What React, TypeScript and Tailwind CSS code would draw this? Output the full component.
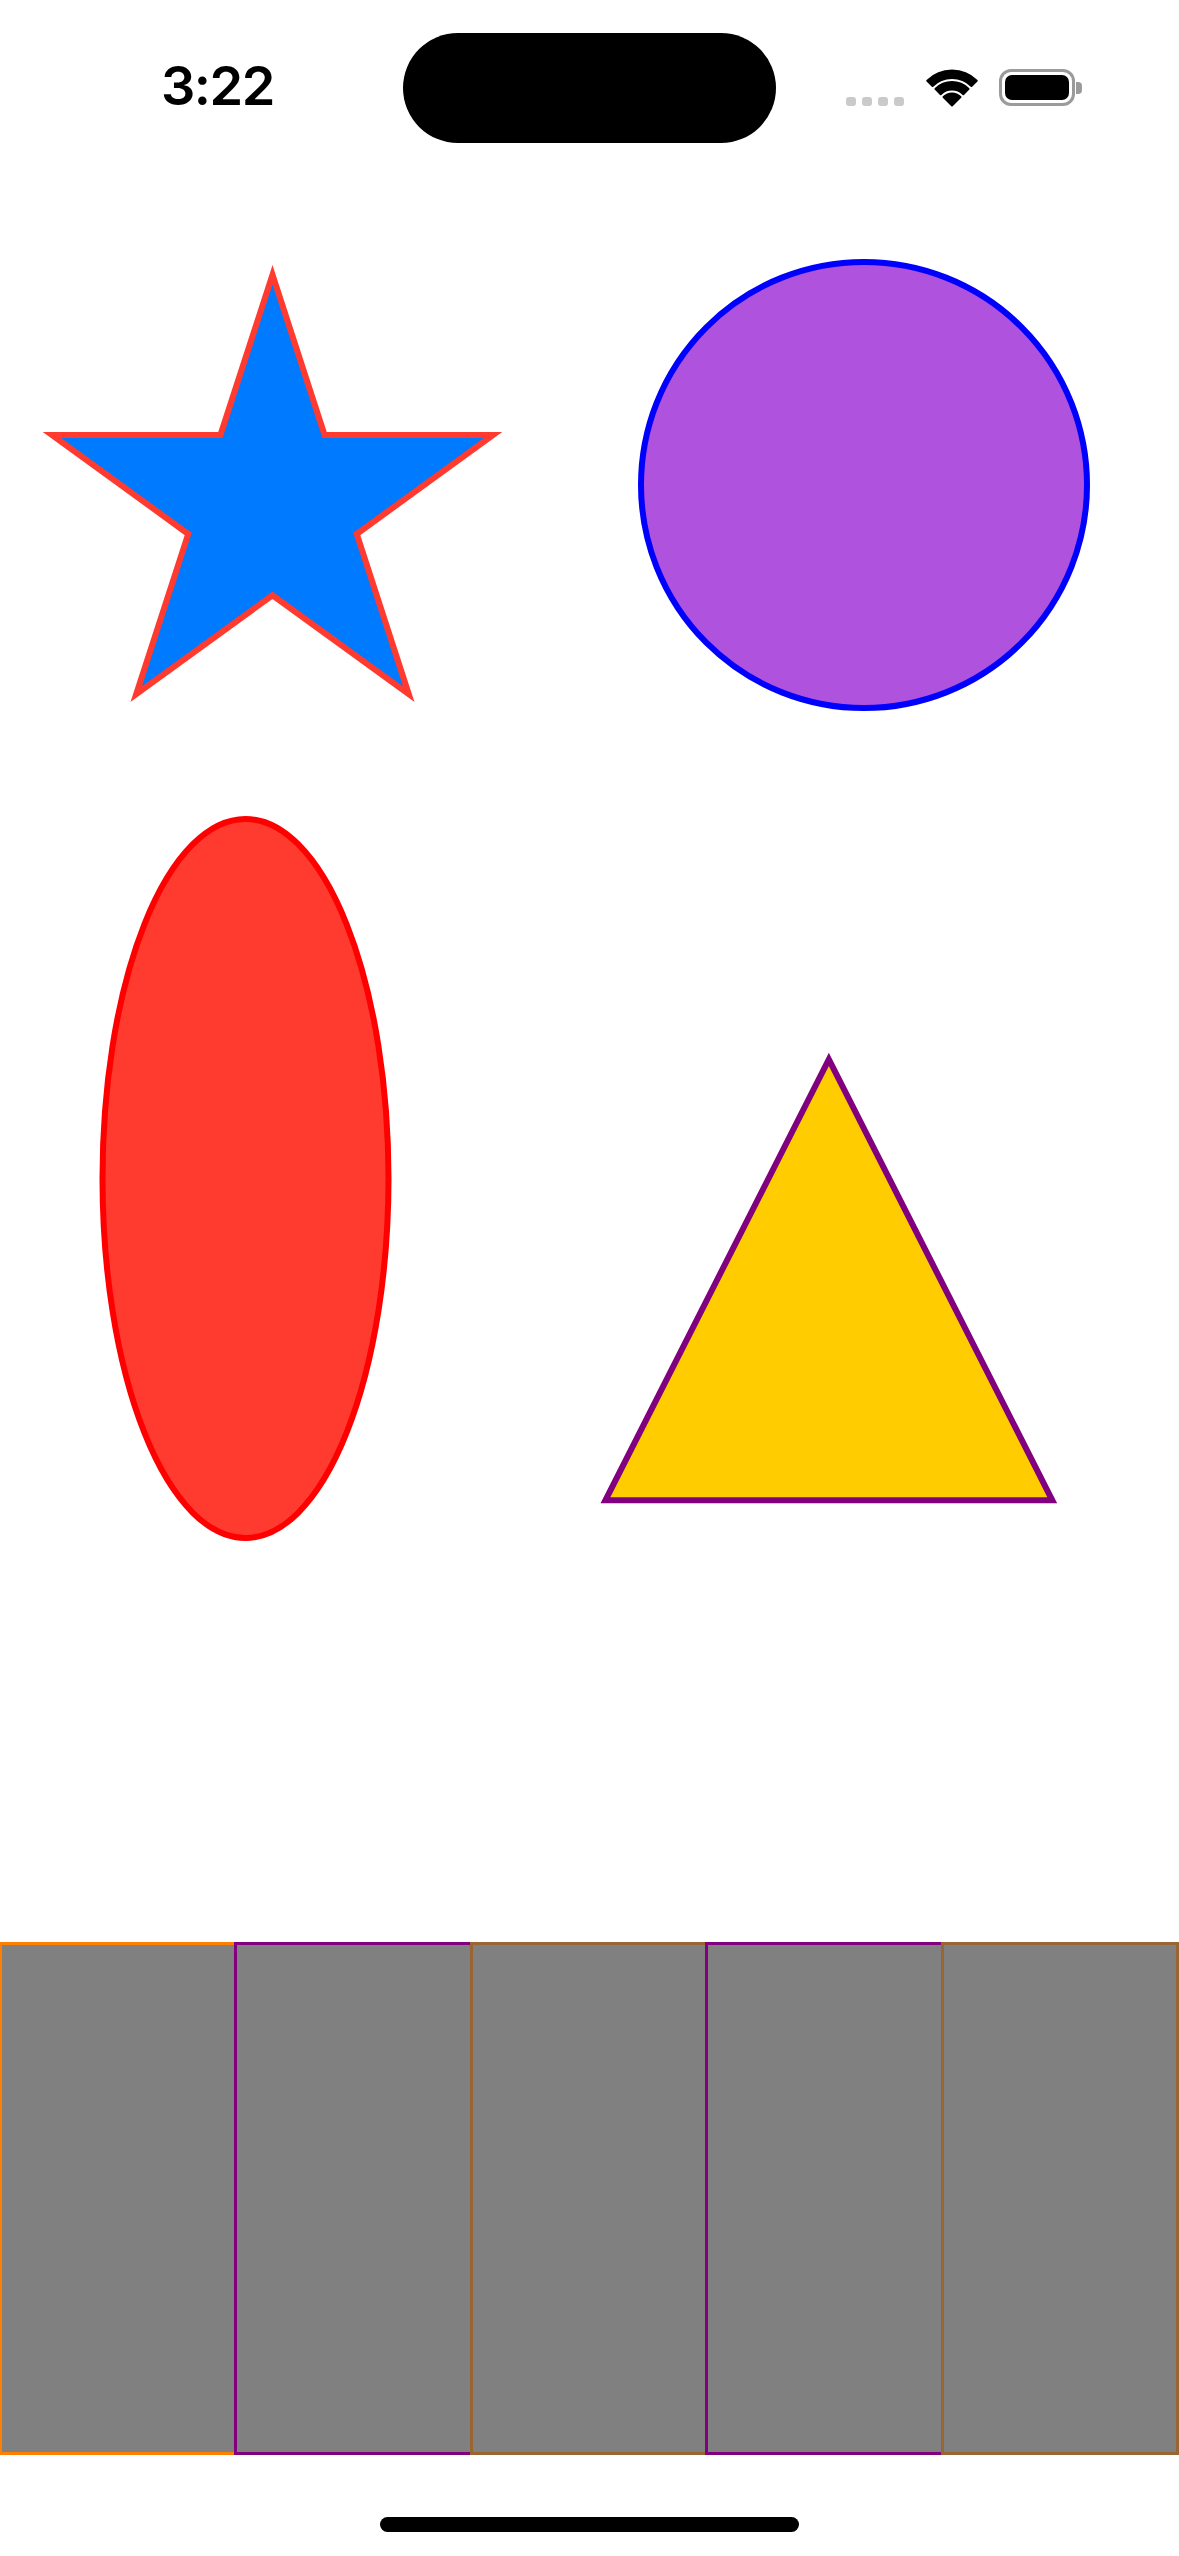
import React from "react";

function starPoints(cx: number, cy: number, R: number, r: number) {
  const pts: string[] = [];
  for (let i = 0; i < 10; i++) {
    const a = ((-90 + i * 36) * Math.PI) / 180;
    const rad = i % 2 === 0 ? R : r;
    pts.push(`${(cx + rad * Math.cos(a)).toFixed(2)},${(cy + rad * Math.sin(a)).toFixed(2)}`);
  }
  return pts.join(" ");
}

function Wifi() {
  return (
    <svg width="50" height="38" viewBox="0 0 50 38" className="block overflow-visible">
      <g fill="#000" stroke="#000" strokeWidth="2" strokeLinejoin="round">
        <path d="M 0.25 12.75 A 35 35 0 0 1 49.75 12.75 L 44.45 18.05 A 27.5 27.5 0 0 0 5.55 18.05 Z" />
        <path d="M 8.38 20.88 A 23.5 23.5 0 0 1 41.62 20.88 L 36.31 26.19 A 16 16 0 0 0 13.69 26.19 Z" />
        <path d="M 25 37.5 L 16.51 29.01 A 12 12 0 0 1 33.49 29.01 Z" />
      </g>
    </svg>
  );
}

function StatusBar() {
  return (
    <div className="flex h-[177px] w-full flex-row items-start">
      <div className="w-[403px] pl-[161px] pt-[59px]">
        <span
          className="block text-[54px] font-semibold leading-none tracking-[-1.5px] text-black"
          style={{ fontFamily: "Inter, 'Noto Sans', sans-serif" }}
        >
          3:22
        </span>
      </div>
      <div className="mt-[33px] h-[110px] w-[373px] rounded-full bg-black" />
      <div className="flex flex-1 flex-row items-end pl-[70px] pt-[68px]">
        <div className="flex flex-row gap-[6px]">
          <div className="h-[9px] w-[10px] rounded-[3px] bg-[#cacaca]" />
          <div className="h-[9px] w-[10px] rounded-[3px] bg-[#cacaca]" />
          <div className="h-[9px] w-[10px] rounded-[3px] bg-[#cacaca]" />
          <div className="h-[9px] w-[10px] rounded-[3px] bg-[#cacaca]" />
        </div>
        <div className="ml-[23px]">
          <Wifi />
        </div>
        <div className="ml-[22px] flex flex-row items-center">
          <div className="flex h-[37px] w-[76px] items-center justify-center rounded-[12px] border-[3px] border-[#9b9b9b] p-[3px]">
            <div className="h-full w-full rounded-[7px] bg-black" />
          </div>
          <div className="ml-[1px] h-[12px] w-[6px] rounded-r-[4px] bg-[#9b9b9b]" />
        </div>
      </div>
    </div>
  );
}

function Shapes() {
  return (
    <div className="grid h-[1765px] w-full grid-cols-[589.5px_589.5px] grid-rows-[613px_1152px]">
      <div>
        <svg className="block h-full w-full" viewBox="0 0 589.5 613">
          <polygon
            points={starPoints(272.5, 329.6, 231.9, 88.6)}
            fill="#007AFF"
            stroke="#FF3B30"
            strokeWidth="6"
            strokeLinejoin="miter"
          />
        </svg>
      </div>
      <div>
        <svg className="block h-full w-full" viewBox="0 0 589.5 613">
          <circle cx="274" cy="308" r="223" fill="#AF52DE" stroke="#0000FF" strokeWidth="6" />
        </svg>
      </div>
      <div>
        <svg className="block h-full w-full" viewBox="0 0 589.5 1152">
          <ellipse cx="245.5" cy="388.5" rx="143" ry="359.5" fill="#FF3B30" stroke="#FF0000" strokeWidth="6" />
        </svg>
      </div>
      <div>
        <svg className="block h-full w-full" viewBox="0 0 589.5 1152">
          <polygon
            points="238.85,269.4 15.4,710.3 462.3,710.3"
            fill="#FFCC00"
            stroke="#800080"
            strokeWidth="6"
            strokeLinejoin="miter"
          />
        </svg>
      </div>
    </div>
  );
}

function Bars() {
  return (
    <div className="h-[513px] w-full overflow-hidden">
      <div className="ml-[-1.5px] flex h-full w-[1180.5px] flex-row">
        <div className="flex-1 border-y-[3px] border-l-[3px] border-[#FF8000] bg-[#808080]" />
        <div className="flex-1 border-y-[3px] border-l-[3px] border-[#800080] bg-[#808080]" />
        <div className="flex-1 border-y-[3px] border-l-[3px] border-[#996633] bg-[#808080]" />
        <div className="flex-1 border-y-[3px] border-l-[3px] border-[#800080] bg-[#808080]" />
        <div className="flex-1 border-[3px] border-[#996633] bg-[#808080]" />
      </div>
    </div>
  );
}

export default function App() {
  return (
    <div className="relative flex h-[2556px] w-[1179px] flex-col overflow-hidden bg-white">
      <StatusBar />
      <Shapes />
      <Bars />
      <div className="flex flex-1 flex-row justify-center pt-[62px]">
        <div className="h-[15px] w-[419px] rounded-full bg-black" />
      </div>
    </div>
  );
}
